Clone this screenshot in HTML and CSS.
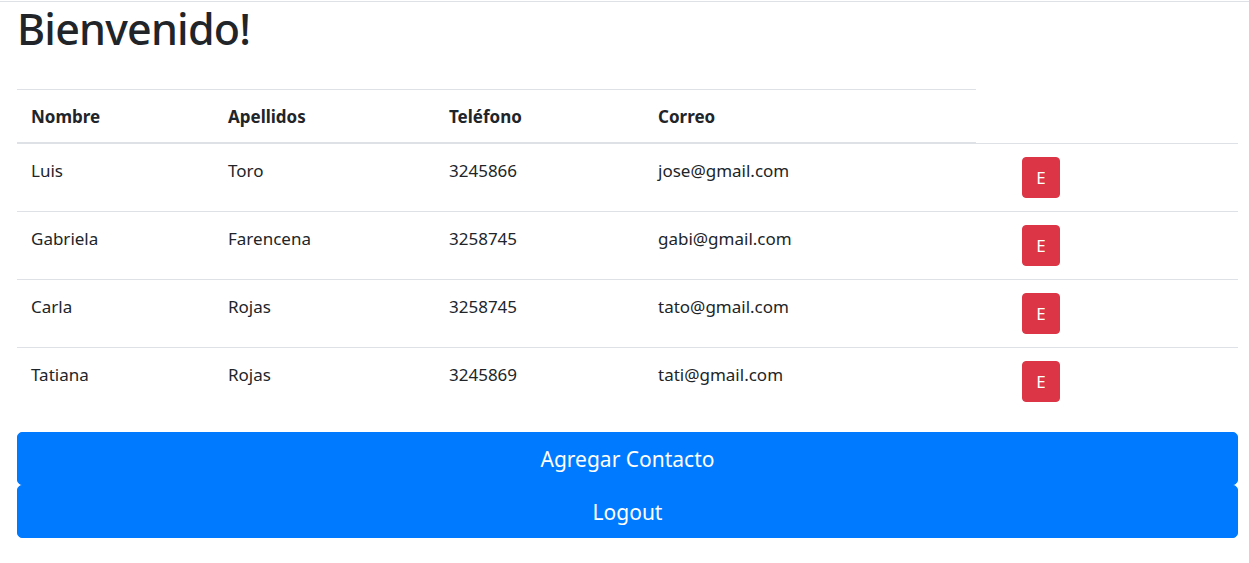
FILE: index.html
```html
<!DOCTYPE html>
<html lang="es">
<head>
<meta charset="utf-8">
<title>Contactos</title>
<link rel="stylesheet" href="styles.css">
</head>
<body>
<div class="topline"></div>
<main class="container">
  <h1 class="title">Bienvenido!</h1>
  <table class="contacts">
    <thead>
      <tr>
        <th class="c1">Nombre</th>
        <th class="c2">Apellidos</th>
        <th class="c3">Teléfono</th>
        <th class="c4">Correo</th>
      </tr>
    </thead>
    <tbody>
      <tr>
        <td class="c1">Luis</td>
        <td class="c2">Toro</td>
        <td class="c3">3245866</td>
        <td class="c4">jose@gmail.com</td>
        <td class="c5"><button class="btn-del">E</button></td>
      </tr>
      <tr>
        <td class="c1">Gabriela</td>
        <td class="c2">Farencena</td>
        <td class="c3">3258745</td>
        <td class="c4">gabi@gmail.com</td>
        <td class="c5"><button class="btn-del">E</button></td>
      </tr>
      <tr>
        <td class="c1">Carla</td>
        <td class="c2">Rojas</td>
        <td class="c3">3258745</td>
        <td class="c4">tato@gmail.com</td>
        <td class="c5"><button class="btn-del">E</button></td>
      </tr>
      <tr>
        <td class="c1">Tatiana</td>
        <td class="c2">Rojas</td>
        <td class="c3">3245869</td>
        <td class="c4">tati@gmail.com</td>
        <td class="c5"><button class="btn-del">E</button></td>
      </tr>
    </tbody>
  </table>
  <div class="actions">
    <button class="btn-main">Agregar Contacto</button>
    <button class="btn-main">Logout</button>
  </div>
</main>
</body>
</html>
```
FILE: styles.css
```css
* { box-sizing: border-box; }
html, body { margin: 0; padding: 0; background: #fff; }
body {
  font-family: "Noto Sans", "Open Sans", sans-serif;
  color: #212529;
  font-size: 17px;
}
.topline {
  margin-top: 1px;
  border-top: 1px solid #dee2e6;
}
.container {
  padding: 0 11px 0 17px;
}
.title {
  margin: 0 0 33px 0;
  font-size: 43px;
  font-weight: 500;
  letter-spacing: -0.8px;
  line-height: 54px;
}
.contacts {
  width: 1221px;
  border-collapse: collapse;
  margin-bottom: 17px;
  table-layout: fixed;
}
.contacts th, .contacts td {
  text-align: left;
  vertical-align: top;
  padding: 13px 14px;
  line-height: 27px;
  border-top: 1px solid #dee2e6;
}
.contacts th {
  font-weight: 700;
  padding-bottom: 12px;
  border-bottom: 2px solid #dee2e6;
  vertical-align: bottom;
}
.c1 { width: 197px; }
.c2 { width: 221px; }
.c3 { width: 209px; }
.c4 { width: 332px; }
.c5 { width: 262px; }
.btn-del {
  display: block;
  margin-left: 32px;
  width: 38px;
  height: 41px;
  padding: 0;
  border: 1px solid #dc3545;
  border-radius: 4px;
  background: #dc3545;
  color: #fff;
  font-family: inherit;
  font-size: 17px;
  cursor: pointer;
}
.actions {
  display: flex;
  flex-direction: column;
  width: 1221px;
}
.btn-main {
  height: 53px;
  padding: 2px 0 0 0;
  border: 1px solid #007bff;
  border-radius: 5px;
  background: #007bff;
  color: #fff;
  font-family: inherit;
  font-size: 21px;
  cursor: pointer;
}
```
